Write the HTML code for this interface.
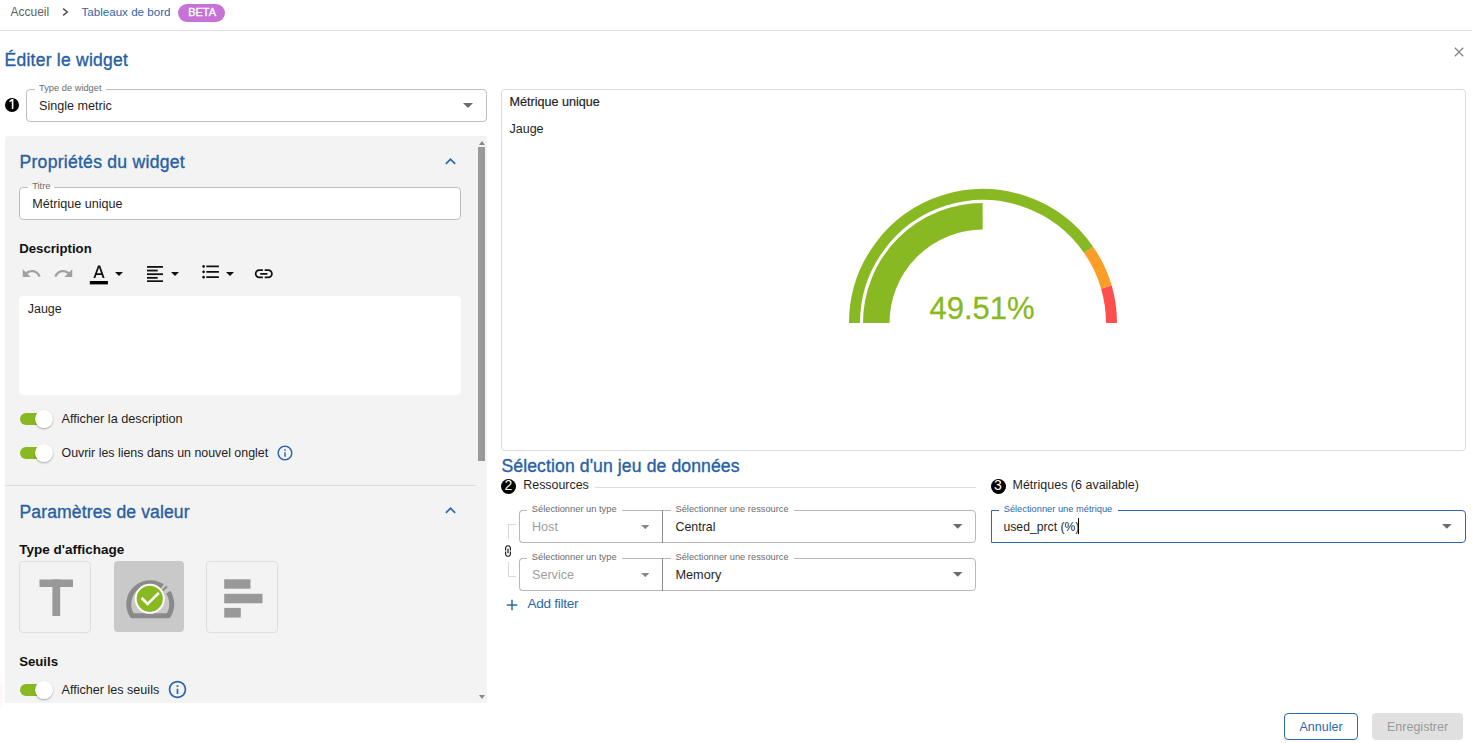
<!DOCTYPE html>
<html><head><meta charset="utf-8"><style>
html,body{margin:0;padding:0;background:#fff;}
body{width:1472px;height:743px;position:relative;overflow:hidden;font-family:"Liberation Sans",sans-serif;}
.t{position:absolute;line-height:1;white-space:nowrap;}
.b{display:inline-block;width:0;height:0;}
</style></head><body>
<div style="position:absolute;left:0px;top:676px;width:6px;height:38px;background:radial-gradient(ellipse 6px 19px at 0 50%, rgba(255,190,190,0.18), rgba(255,255,255,0))"></div>
<div class="t" style="left:10.50px;top:6.01px;font-size:12px;color:#5f5f5f;font-weight:normal;">Accueil</div>
<svg style="position:absolute;left:58px;top:4px;" width="14" height="16" viewBox="0 0 14 16"><path d="M5.1 4.6L9.3 8L5.1 11.4" fill="none" stroke="#555" stroke-width="1.6"/></svg>
<div class="t" style="left:81.50px;top:6.01px;font-size:11.6px;color:#2e68aa;font-weight:normal;">Tableaux de bord</div>
<div style="position:absolute;left:178px;top:4px;width:47px;height:18px;background:#c772d6;border-radius:9px"></div>
<div class="t" style="left:188.30px;top:7.21px;font-size:10.9px;color:#fff;font-weight:normal;-webkit-text-stroke:0.35px #fff">BETA</div>
<div style="position:absolute;left:0px;top:30px;width:1472px;height:1px;background:#e2e2e2"></div>
<div class="t" style="left:4.50px;top:52.01px;font-size:17.5px;color:#285fa5;font-weight:normal;letter-spacing:0.25px;-webkit-text-stroke:0.35px #285fa5">Éditer le widget</div>
<svg style="position:absolute;left:1451px;top:44px;" width="16" height="16" viewBox="0 0 24 24"><path d="M19 6.41L17.59 5 12 10.59 6.41 5 5 6.41 10.59 12 5 17.59 6.41 19 12 13.41 17.59 19 19 17.59 13.41 12z" fill="#888"/></svg>
<div style="position:absolute;left:5.0px;top:97.7px;width:14px;height:14px;background:#000;border-radius:50%"></div>
<svg style="position:absolute;left:0px;top:90px;" width="24" height="24" viewBox="0 90 24 24"><path d="M11.8 99 L13.4 99 L13.4 109 L11.8 109 L11.8 101.3 L9.4 102.3 L9.4 100.7 Z" fill="#fff"/></svg>
<div style="position:absolute;left:26px;top:89px;width:461px;height:33px;box-sizing:border-box;border:1px solid #bdbdbd;border-radius:4px;background:#fff;"></div>
<div style="position:absolute;left:35px;top:88px;width:71px;height:2px;background:#fff"></div>
<div class="t" style="left:39.00px;top:84.21px;font-size:9.3px;color:#6b6b6b;font-weight:normal;">Type de widget</div>
<div class="t" style="left:39.00px;top:99.61px;font-size:12.6px;color:#1f1f1f;font-weight:normal;">Single metric</div>
<svg style="position:absolute;left:463px;top:103px;" width="10" height="5" viewBox="0 0 10 5"><path d="M0 0L5.0 5L10 0z" fill="#6b6b6b"/></svg>
<div style="position:absolute;left:5px;top:136px;width:482px;height:567px;background:#f3f3f3;border-radius:3px 0 0 0"></div>
<div style="position:absolute;left:478px;top:147px;width:7px;height:314px;background:#999"></div>
<svg style="position:absolute;left:478.5px;top:140.5px;" width="6" height="4" viewBox="0 0 6 4"><path d="M0 4L3 0L6 4z" fill="#888"/></svg>
<svg style="position:absolute;left:478.5px;top:694.5px;" width="6" height="4" viewBox="0 0 6 4"><path d="M0 0L3 4L6 0z" fill="#888"/></svg>
<div class="t" style="left:19.50px;top:154.00px;font-size:17.6px;color:#285fa5;font-weight:normal;letter-spacing:0.25px;-webkit-text-stroke:0.35px #285fa5">Propriétés du widget</div>
<svg style="position:absolute;left:439.9px;top:151.2px;" width="21" height="21" viewBox="0 0 24 24"><path d="M12 8l-6 6 1.41 1.41L12 10.83l4.59 4.58L18 14z" fill="#2e68aa"/></svg>
<div style="position:absolute;left:19px;top:187px;width:442px;height:33px;box-sizing:border-box;border:1px solid #bdbdbd;border-radius:4px;background:#fff;"></div>
<div style="position:absolute;left:28.200000000000003px;top:186px;width:26px;height:2px;background:#fff"></div>
<div class="t" style="left:32.20px;top:182.21px;font-size:9.3px;color:#6b6b6b;font-weight:normal;">Titre</div>
<div class="t" style="left:32.20px;top:197.50px;font-size:12.6px;color:#1f1f1f;font-weight:normal;">Métrique unique</div>
<div class="t" style="left:19.20px;top:241.51px;font-size:13.2px;color:#111;font-weight:bold;">Description</div>
<svg style="position:absolute;left:20.7px;top:263.3px;" width="21" height="21" viewBox="0 0 24 24"><path d="M12.5 8c-2.65 0-5.05.99-6.9 2.6L2 7v9h9l-3.62-3.62c1.39-1.16 3.16-1.88 5.12-1.88 3.54 0 6.55 2.31 7.6 5.5l2.37-.78C21.08 11.03 17.15 8 12.5 8z" fill="#a0a0a0"/></svg>
<svg style="position:absolute;left:53px;top:263.3px;" width="21" height="21" viewBox="0 0 24 24"><path d="M18.4 10.6C16.55 8.99 14.15 8 11.5 8c-4.65 0-8.58 3.03-9.96 7.22L3.9 16c1.05-3.19 4.05-5.5 7.6-5.5 1.95 0 3.73.72 5.12 1.88L13 16h9V7l-3.6 3.6z" fill="#a0a0a0"/></svg>
<svg style="position:absolute;left:89px;top:264px;" width="20" height="22" viewBox="0 0 20 22"><path d="M9 1.5h2.2L15.6 14h-1.9l-1.1-3.1H7.4L6.3 14H4.4zM8 9.2h4L10.1 3.6z" fill="#111"/><rect x="0.8" y="17" width="18.1" height="3.4" fill="#000"/></svg>
<svg style="position:absolute;left:115px;top:272px;" width="8" height="4" viewBox="0 0 8 4"><path d="M0 0L4.0 4L8 0z" fill="#111"/></svg>
<svg style="position:absolute;left:146.8px;top:265.8px;" width="16.2" height="16.2" viewBox="0 0 16.2 16.2"><rect x="0" y="0" width="16.1" height="1.8" fill="#111"/><rect x="0" y="3.65" width="10.7" height="1.8" fill="#111"/><rect x="0" y="7.3" width="16.1" height="1.8" fill="#111"/><rect x="0" y="10.95" width="10.7" height="1.8" fill="#111"/><rect x="0" y="14.3" width="16.1" height="1.8" fill="#111"/></svg>
<svg style="position:absolute;left:171px;top:272px;" width="8" height="4" viewBox="0 0 8 4"><path d="M0 0L4.0 4L8 0z" fill="#111"/></svg>
<svg style="position:absolute;left:199.5px;top:261px;" width="21.6" height="21.6" viewBox="0 0 24 24"><path d="M4 10.5c-.83 0-1.5.67-1.5 1.5s.67 1.5 1.5 1.5 1.5-.67 1.5-1.5-.67-1.5-1.5-1.5zm0-6c-.83 0-1.5.67-1.5 1.5S3.17 7.5 4 7.5 5.5 6.83 5.5 6 4.83 4.5 4 4.5zm0 12c-.83 0-1.5.68-1.5 1.5s.68 1.5 1.5 1.5 1.5-.68 1.5-1.5-.67-1.5-1.5-1.5zM7 19h14v-2H7v2zm0-6h14v-2H7v2zm0-8v2h14V5H7z" fill="#111"/></svg>
<svg style="position:absolute;left:226px;top:272px;" width="8" height="4" viewBox="0 0 8 4"><path d="M0 0L4.0 4L8 0z" fill="#111"/></svg>
<svg style="position:absolute;left:253px;top:262.6px;" width="21.6" height="21.6" viewBox="0 0 24 24"><path d="M3.9 12c0-1.71 1.39-3.1 3.1-3.1h4V7H7c-2.76 0-5 2.24-5 5s2.24 5 5 5h4v-1.9H7c-1.71 0-3.1-1.39-3.1-3.1zM8 13h8v-2H8v2zm9-6h-4v1.9h4c1.71 0 3.1 1.39 3.1 3.1s-1.39 3.1-3.1 3.1h-4V17h4c2.76 0 5-2.24 5-5s-2.24-5-5-5z" fill="#111"/></svg>
<div style="position:absolute;left:19px;top:296px;width:442px;height:99px;background:#fff;border-radius:4px"></div>
<div class="t" style="left:27.70px;top:302.51px;font-size:12.5px;color:#1f1f1f;font-weight:normal;">Jauge</div>
<div style="position:absolute;left:20px;top:413px;width:28px;height:12px;background:#88b922;border-radius:6px"></div>
<div style="position:absolute;left:35px;top:410.2px;width:17.8px;height:17.8px;background:#fff;border-radius:50%;box-shadow:0 1px 2px rgba(0,0,0,0.3)"></div>
<div class="t" style="left:61.50px;top:412.50px;font-size:12.7px;color:#1f1f1f;font-weight:normal;">Afficher la description</div>
<div style="position:absolute;left:20px;top:447px;width:28px;height:12px;background:#88b922;border-radius:6px"></div>
<div style="position:absolute;left:35px;top:444.2px;width:17.8px;height:17.8px;background:#fff;border-radius:50%;box-shadow:0 1px 2px rgba(0,0,0,0.3)"></div>
<div class="t" style="left:61.50px;top:446.91px;font-size:12.4px;color:#1f1f1f;font-weight:normal;">Ouvrir les liens dans un nouvel onglet</div>
<svg style="position:absolute;left:276px;top:444px;" width="18" height="18" viewBox="0 0 24 24"><path d="M11 7h2v2h-2zm0 4h2v6h-2zm1-9C6.48 2 2 6.48 2 12s4.48 10 10 10 10-4.48 10-10S17.52 2 12 2zm0 18c-4.41 0-8-3.59-8-8s3.59-8 8-8 8 3.59 8 8-3.59 8-8 8z" fill="#2e68aa"/></svg>
<div style="position:absolute;left:5px;top:485px;width:471px;height:1px;background:#dcdcdc"></div>
<div class="t" style="left:19.50px;top:504.00px;font-size:17.6px;color:#285fa5;font-weight:normal;letter-spacing:0.1px;-webkit-text-stroke:0.35px #285fa5">Paramètres de valeur</div>
<svg style="position:absolute;left:439.9px;top:500.2px;" width="21" height="21" viewBox="0 0 24 24"><path d="M12 8l-6 6 1.41 1.41L12 10.83l4.59 4.58L18 14z" fill="#2e68aa"/></svg>
<div class="t" style="left:19.20px;top:542.51px;font-size:13.5px;color:#111;font-weight:bold;">Type d'affichage</div>
<div style="position:absolute;left:19px;top:561px;width:72px;height:72px;box-sizing:border-box;border:1px solid #dedede;border-radius:4px"></div>
<svg style="position:absolute;left:19.5px;top:561px;" width="71" height="71.5" viewBox="0 0 71 71.5"><rect x="19.5" y="18.5" width="33.5" height="7.5" fill="#999"/><rect x="32.4" y="18.5" width="7.8" height="36.5" fill="#999"/></svg>
<div style="position:absolute;left:114px;top:561px;width:70px;height:71px;background:#c9c9c9;border-radius:4px"></div>
<svg style="position:absolute;left:113.75px;top:561.5px;" width="70" height="70.5" viewBox="0 0 70 70.5"><path d="M18.15 53.8 A21.5 21.5 0 1 1 54.35 53.8 Z" fill="none" stroke="#8a8a8a" stroke-width="5" stroke-linejoin="round"/><path d="M48.3 24.3 A21.5 21.5 0 0 1 54.1 30.2" stroke="#c9c9c9" stroke-width="7" fill="none"/><path d="M48.5 28.6 L53 24.6" stroke="#8a8a8a" stroke-width="2"/><circle cx="35.75" cy="36.8" r="15.05" fill="#fff"/><circle cx="35.75" cy="36.8" r="13.1" fill="#88b922"/><path d="M27.65 36 L33.65 42 L44.85 30.8" fill="none" stroke="#fff" stroke-width="2.6"/></svg>
<div style="position:absolute;left:206px;top:561px;width:72px;height:72px;box-sizing:border-box;border:1px solid #dedede;border-radius:4px"></div>
<svg style="position:absolute;left:206.5px;top:561.3px;" width="71.3" height="71.2" viewBox="0 0 71.3 71.2"><rect x="17.2" y="18.3" width="26.3" height="9.4" fill="#999"/><rect x="17.2" y="32.8" width="38.3" height="9.5" fill="#999"/><rect x="17.2" y="46.9" width="16.6" height="9.7" fill="#999"/></svg>
<div class="t" style="left:19.20px;top:654.60px;font-size:13.2px;color:#111;font-weight:bold;">Seuils</div>
<div style="position:absolute;left:20px;top:684px;width:28px;height:12px;background:#88b922;border-radius:6px"></div>
<div style="position:absolute;left:35px;top:681.2px;width:17.8px;height:17.8px;background:#fff;border-radius:50%;box-shadow:0 1px 2px rgba(0,0,0,0.3)"></div>
<div class="t" style="left:61.50px;top:683.50px;font-size:12.6px;color:#1f1f1f;font-weight:normal;">Afficher les seuils</div>
<svg style="position:absolute;left:167px;top:679px;" width="21" height="21" viewBox="0 0 24 24"><path d="M11 7h2v2h-2zm0 4h2v6h-2zm1-9C6.48 2 2 6.48 2 12s4.48 10 10 10 10-4.48 10-10S17.52 2 12 2zm0 18c-4.41 0-8-3.59-8-8s3.59-8 8-8 8 3.59 8 8-3.59 8-8 8z" fill="#2e68aa"/></svg>
<div style="position:absolute;left:501px;top:89px;width:965px;height:362px;box-sizing:border-box;border:1px solid #dcdcdc;border-radius:4px"></div>
<div class="t" style="left:509.50px;top:96.21px;font-size:12.6px;color:#1f1f1f;font-weight:normal;-webkit-text-stroke:0.2px #1f1f1f">Métrique unique</div>
<div class="t" style="left:509.50px;top:122.91px;font-size:12.5px;color:#1f1f1f;font-weight:normal;">Jauge</div>
<svg style="position:absolute;left:0px;top:0px;pointer-events:none" width="1472" height="743" viewBox="0 0 1472 743"><path d="M854.50 323.00 A128.5 128.5 0 0 1 1088.59 249.77" stroke="#88b922" stroke-width="11" fill="none"/><path d="M1088.59 249.77 A128.5 128.5 0 0 1 1106.40 287.15" stroke="#fb9d27" stroke-width="11" fill="none"/><path d="M1106.40 287.15 A128.5 128.5 0 0 1 1111.50 323.00" stroke="#fe4f4f" stroke-width="11" fill="none"/><path d="M876.25 323.00 A106.75 106.75 0 0 1 982.66 216.25" stroke="#88b922" stroke-width="26.5" fill="none"/></svg>
<div class="t" style="left:929.50px;top:292.71px;font-size:31px;color:#88b922;font-weight:normal;-webkit-text-stroke:0.3px #88b922">49.51%</div>
<div class="t" style="left:501.50px;top:457.61px;font-size:17.6px;color:#285fa5;font-weight:normal;letter-spacing:0.1px;-webkit-text-stroke:0.35px #285fa5">Sélection d'un jeu de données</div>
<div style="position:absolute;left:501.0px;top:478.8px;width:15px;height:15px;background:#000;border-radius:50%"></div>
<div class="t" style="left:498.50px;top:477.90px;font-size:14px;color:#fff;font-weight:normal;width:20px;text-align:center">2</div>
<div class="t" style="left:523.30px;top:478.91px;font-size:12.4px;color:#1f1f1f;font-weight:normal;">Ressources</div>
<div style="position:absolute;left:595px;top:487px;width:381px;height:1px;background:#dcdcdc"></div>
<div style="position:absolute;left:508px;top:524.4px;width:7.6px;height:15px;box-sizing:border-box;border-left:1px solid #d9d9d9;border-top:1px solid #d9d9d9"></div>
<div style="position:absolute;left:508px;top:562px;width:7.6px;height:15px;box-sizing:border-box;border-left:1px solid #d9d9d9;border-bottom:1px solid #d9d9d9"></div>
<svg style="position:absolute;left:501.3px;top:543.6px;" width="14" height="14" viewBox="0 0 24 24"><path transform="rotate(90 12 12)" d="M3.9 12c0-1.71 1.39-3.1 3.1-3.1h4V7H7c-2.76 0-5 2.24-5 5s2.24 5 5 5h4v-1.9H7c-1.71 0-3.1-1.39-3.1-3.1zM8 13h8v-2H8v2zm9-6h-4v1.9h4c1.71 0 3.1 1.39 3.1 3.1s-1.39 3.1-3.1 3.1h-4V17h4c2.76 0 5-2.24 5-5s-2.24-5-5-5z" fill="#111"/></svg>
<div style="position:absolute;left:519px;top:510px;width:144px;height:33px;box-sizing:border-box;border:1px solid #b8b8b8;border-right:none;border-radius:4px 0 0 4px;background:#fff"></div>
<div style="position:absolute;left:662px;top:510px;width:314px;height:33px;box-sizing:border-box;border:1px solid #b8b8b8;border-radius:0 4px 4px 0;background:#fff"></div>
<div style="position:absolute;left:662px;top:510px;width:1px;height:33px;background:#8c8c8c"></div>
<div style="position:absolute;left:527px;top:509px;width:95px;height:3px;background:#fff"></div>
<div class="t" style="left:531.80px;top:505.00px;font-size:9.3px;color:#6b6b6b;font-weight:normal;">Sélectionner un type</div>
<div style="position:absolute;left:671px;top:509px;width:122.5px;height:3px;background:#fff"></div>
<div class="t" style="left:675.50px;top:505.00px;font-size:9.3px;color:#6b6b6b;font-weight:normal;">Sélectionner une ressource</div>
<div class="t" style="left:532.00px;top:521.00px;font-size:12.6px;color:#9e9e9e;font-weight:normal;">Host</div>
<div class="t" style="left:675.50px;top:521.00px;font-size:12.4px;color:#1f1f1f;font-weight:normal;">Central</div>
<svg style="position:absolute;left:641.25px;top:524.8px;" width="8.5" height="4.2" viewBox="0 0 8.5 4.2"><path d="M0 0L4.25 4.2L8.5 0z" fill="#8a8a8a"/></svg>
<svg style="position:absolute;left:953px;top:524px;" width="9.5" height="4.8" viewBox="0 0 9.5 4.8"><path d="M0 0L4.75 4.8L9.5 0z" fill="#6b6b6b"/></svg>
<div style="position:absolute;left:519px;top:558px;width:144px;height:33px;box-sizing:border-box;border:1px solid #b8b8b8;border-right:none;border-radius:4px 0 0 4px;background:#fff"></div>
<div style="position:absolute;left:662px;top:558px;width:314px;height:33px;box-sizing:border-box;border:1px solid #b8b8b8;border-radius:0 4px 4px 0;background:#fff"></div>
<div style="position:absolute;left:662px;top:558px;width:1px;height:33px;background:#8c8c8c"></div>
<div style="position:absolute;left:527px;top:557px;width:95px;height:3px;background:#fff"></div>
<div class="t" style="left:531.80px;top:553.00px;font-size:9.3px;color:#6b6b6b;font-weight:normal;">Sélectionner un type</div>
<div style="position:absolute;left:671px;top:557px;width:122.5px;height:3px;background:#fff"></div>
<div class="t" style="left:675.50px;top:553.00px;font-size:9.3px;color:#6b6b6b;font-weight:normal;">Sélectionner une ressource</div>
<div class="t" style="left:532.00px;top:569.00px;font-size:12.6px;color:#9e9e9e;font-weight:normal;">Service</div>
<div class="t" style="left:675.50px;top:569.00px;font-size:12.7px;color:#1f1f1f;font-weight:normal;">Memory</div>
<svg style="position:absolute;left:641.25px;top:572.8px;" width="8.5" height="4.2" viewBox="0 0 8.5 4.2"><path d="M0 0L4.25 4.2L8.5 0z" fill="#8a8a8a"/></svg>
<svg style="position:absolute;left:953px;top:572px;" width="9.5" height="4.8" viewBox="0 0 9.5 4.8"><path d="M0 0L4.75 4.8L9.5 0z" fill="#6b6b6b"/></svg>
<div style="position:absolute;left:990.5px;top:478.8px;width:15px;height:15px;background:#000;border-radius:50%"></div>
<div class="t" style="left:988.00px;top:477.90px;font-size:14px;color:#fff;font-weight:normal;width:20px;text-align:center">3</div>
<div class="t" style="left:1012.50px;top:479.01px;font-size:12.5px;color:#1f1f1f;font-weight:normal;">Métriques (6 available)</div>
<div style="position:absolute;left:991px;top:510px;width:475px;height:33px;box-sizing:border-box;border:1.3px solid #2e68aa;border-radius:0 4px 4px 0;background:#fff"></div>
<div style="position:absolute;left:999px;top:508px;width:118.5px;height:4px;background:#fff"></div>
<div class="t" style="left:1003.70px;top:505.21px;font-size:9.3px;color:#2e68aa;font-weight:normal;">Sélectionner une métrique</div>
<div class="t" style="left:1003.50px;top:520.60px;font-size:12.2px;color:#1f1f1f;font-weight:normal;">used_prct (%)</div>
<div style="position:absolute;left:1078px;top:518px;width:1.2px;height:16.4px;background:#000"></div>
<svg style="position:absolute;left:1442px;top:523.9px;" width="9.7" height="4.8" viewBox="0 0 9.7 4.8"><path d="M0 0L4.85 4.8L9.7 0z" fill="#6b6b6b"/></svg>
<svg style="position:absolute;left:503px;top:596px;" width="18" height="18" viewBox="0 0 24 24"><path d="M19 13h-6v6h-2v-6H5v-2h6V5h2v6h6v2z" fill="#2e68aa"/></svg>
<div class="t" style="left:527.50px;top:597.00px;font-size:13.6px;color:#2e68aa;font-weight:normal;letter-spacing:-0.3px">Add filter</div>
<div style="position:absolute;left:1284px;top:713px;width:74px;height:27px;box-sizing:border-box;border:1px solid #2e68aa;border-radius:4px"></div>
<div class="t" style="left:1299.50px;top:720.72px;font-size:12.5px;color:#2e68aa;font-weight:normal;">Annuler</div>
<div style="position:absolute;left:1372px;top:713px;width:91px;height:27px;background:#e0e0e0;border-radius:4px"></div>
<div class="t" style="left:1387.00px;top:720.72px;font-size:12.5px;color:#9a9a9a;font-weight:normal;">Enregistrer</div>
</body></html>
